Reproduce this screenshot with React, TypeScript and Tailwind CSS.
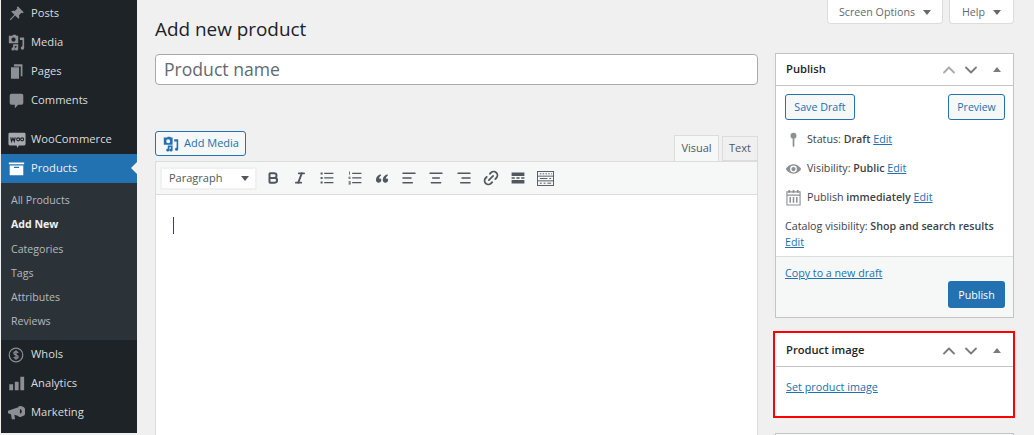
import { AlignCenter, AlignLeft, AlignRight, Bold, ChevronDown, ChevronUp, Italic, Link2 } from 'lucide-react';
import type { ReactNode } from 'react';

const font = { fontFamily: '"Open Sans", "Noto Sans", sans-serif' };

function Svg({ children, size = 17, className = '' }: { children: ReactNode; size?: number; className?: string }) {
  return (
    <svg width={size} height={size} viewBox="0 0 20 20" fill="currentColor" className={className}>
      {children}
    </svg>
  );
}

const PinIcon = () => (
  <Svg><path d="M11.500 1.500l7 7-1.400 1.100-1.200-.6-3 3c.7 1.600.4 3.200-.6 4.300L8.400 12.400 3 18l-1-1 5.500-5.500-3.800-3.900c1.100-1 2.800-1.300 4.300-.6l3-3-.6-1.200z" /></Svg>
);
const MediaIcon = ({ size = 17 }: { size?: number }) => (
  <Svg size={size} className="shrink-0">
    <path fillRule="evenodd" d="M1 2h4l1-1h3l1 1h2v9H1V2zm5.500 2a2.500 2.500 0 100 5 2.500 2.500 0 000-5z" />
    <path d="M14 4h5v12.500a2 2 0 11-2-2V7h-3V4zM6 12h6v5.500a2 2 0 11-2-2V14H8v3.500a2 2 0 11-2-2V12z" />
  </Svg>
);
const PagesIcon = () => (
  <Svg><path d="M7 1.500h10v14h-2V4H7V1.500zM3.500 5H13v13.500H3.500V5z" /></Svg>
);
const CommentIcon = () => (
  <Svg><path d="M4 2h12a2 2 0 012 2v9a2 2 0 01-2 2h-4l-4 4v-4H4a2 2 0 01-2-2V4a2 2 0 012-2z" /></Svg>
);
const WooIcon = () => (
  <svg width="18" height="18" viewBox="0 0 20 20" className="shrink-0">
    <path fill="#a7aaad" d="M2 2h16a1.500 1.500 0 011.500 1.500v11a1.500 1.500 0 01-1.500 1.500h-6l-1.500 3-1-3H2A1.500 1.500 0 01.500 14.500v-11A1.500 1.500 0 012 2z" />
    <path fill="none" stroke="#1d2327" strokeWidth="1.300" d="M3 7l1 4.500 1.500-3.500 1.500 3.500 1-4.500" />
    <circle cx="11.300" cy="9.300" r="1.700" fill="none" stroke="#1d2327" strokeWidth="1.200" />
    <circle cx="15.700" cy="9.300" r="1.700" fill="none" stroke="#1d2327" strokeWidth="1.200" />
  </svg>
);
const ArchiveIcon = () => (
  <Svg>
    <path fillRule="evenodd" d="M1 3h18v2H1V3zm1 3.500h16V18H2V6.500zM7 8v1.500h6V8H7z" />
  </Svg>
);
const DollarIcon = () => (
  <svg width="16" height="16" viewBox="0 0 20 20" fill="none" stroke="currentColor" className="shrink-0">
    <circle cx="10" cy="10" r="8.500" strokeWidth="1.500" />
    <path strokeWidth="1.600" d="M12.700 7.300c-.5-1-1.500-1.500-2.700-1.500-1.500 0-2.600.8-2.600 2s1 1.800 2.600 2.200 2.700 1 2.700 2.200-1.200 2-2.700 2c-1.300 0-2.300-.6-2.800-1.600M10 4v12" />
  </svg>
);
const BarsIcon = () => (
  <Svg><path d="M1.500 11h4.500v7H1.500zM8 8h4.500v10H8zM14.500 2H19v16h-4.500z" /></Svg>
);
const MegaphoneIcon = () => (
  <Svg>
    <path d="M0 8L13 3.500v11L7.500 12.500l.8 5.500H4.500L3.500 12 0 11V8z" />
    <path fillRule="evenodd" d="M12.500 2.500a6.500 6.500 0 110 12.500V2.500zm1.500 3.500v5.500a2.800 2.800 0 000-5.500z" />
  </Svg>
);

function MenuItem({ icon, label, active = false }: { icon: ReactNode; label: string; active?: boolean }) {
  return (
    <div className={`relative flex h-[29px] items-center pl-[7px] text-[11.200px] ${active ? 'bg-[#2271b1] text-[#f0f0f1]' : 'text-[#dcdcde]'}`}>
      <span className={`flex w-[23px] shrink-0 ${active ? 'text-white' : 'text-[#8c8f94]'}`}>{icon}</span>
      <span>{label}</span>
      {active && (
        <span className="absolute right-0 top-[8px] border-y-[6px] border-r-[6px] border-y-transparent border-r-[#f0f0f1]" />
      )}
    </div>
  );
}

function Sidebar() {
  const sub = ['All Products', 'Add New', 'Categories', 'Tags', 'Attributes', 'Reviews'];
  return (
    <aside className="ml-px h-[433px] w-[136px] shrink-0 overflow-hidden bg-[#1d2327]">
      <div className="-mt-[1px]">
        <MenuItem icon={<PinIcon />} label="Posts" />
        <MenuItem icon={<MediaIcon />} label="Media" />
        <MenuItem icon={<PagesIcon />} label="Pages" />
        <MenuItem icon={<CommentIcon />} label="Comments" />
        <div className="h-[10px]" />
        <MenuItem icon={<WooIcon />} label="WooCommerce" />
        <MenuItem icon={<ArchiveIcon />} label="Products" active />
        <ul className="bg-[#2c3338] pb-[6px] pt-[6px] text-[10.600px] text-[#b4b9be]">
          {sub.map((s) => (
            <li key={s} className={`flex h-[24.200px] items-center pl-[10px] ${s === 'Add New' ? 'font-bold text-[#f0f0f1]' : ''}`}>
              {s}
            </li>
          ))}
        </ul>
        <MenuItem icon={<DollarIcon />} label="Whols" />
        <MenuItem icon={<BarsIcon />} label="Analytics" />
        <MenuItem icon={<MegaphoneIcon />} label="Marketing" />
      </div>
    </aside>
  );
}

const UlIcon = () => (
  <Svg size={16}><path d="M2 3h2.500v2.500H2zM6.500 3.500H18V5H6.500zM2 8.700h2.500v2.500H2zM6.500 9.200H18v1.500H6.500zM2 14.500h2.500V17H2zM6.500 15H18v1.500H6.500z" /></Svg>
);
const OlIcon = () => (
  <Svg size={16}><path d="M2.500 2h1v4h-1zM6.500 3.500H18V5H6.500zM2 8.500h2.500v1H3v.5h1.500v1H2zM6.500 9.200H18v1.500H6.500zM2 14h2.500v4H2v-1h1.500v-.5H2v-1h1.500V15H2zM6.500 15H18v1.500H6.500z" /></Svg>
);
const QuoteIcon = () => (
  <Svg size={17}><path d="M9 5c-3 1-5.500 3-5.500 6.500A3 3 0 006.500 15 3 3 0 009 10c-1 0-1.800.2-2 .5C7 8.800 8 7.500 9.500 6.500zM17 5c-3 1-5.500 3-5.500 6.500a3 3 0 003 3.500 3 3 0 002.500-5c-1 0-1.800.2-2 .5 0-1.700 1-3 2.500-4z" /></Svg>
);
const HrIcon = () => (
  <Svg size={16}><path d="M2 3h16v4.500H2zM2 9h4v2H2zM8 9h4v2H8zM14 9h4v2h-4zM2 12.500h16V17H2z" /></Svg>
);
const KitchenIcon = () => (
  <svg width="17" height="15" viewBox="0 0 18 16" fill="none" stroke="currentColor" strokeWidth="1">
    <rect x="0.500" y="0.500" width="17" height="15" />
    <path d="M0.500 5.500h17M0.500 10.500h17M3 3h1.500M6 3h1.500M9 3h1.500M12 3h1.500M15 3h1M3 8h8M13 8h2M3 13h2M7 13h2M11 13h4" />
  </svg>
);

function ToolIcon({ children }: { children: ReactNode }) {
  return <span className="flex w-[27.300px] items-center justify-center">{children}</span>;
}

function Editor() {
  return (
    <main className="ml-[18px] w-[603px] shrink-0">
      <h1 className="pt-[15px] text-[18.900px] leading-[28px] text-[#1d2327]">Add new product</h1>
      <div className="mt-[11px] flex h-[31px] items-center rounded-[4px] border border-[#a7aaad] bg-white pl-[8px] text-[17.600px] text-[#646970]">
        Product name
      </div>
      <div className="mt-[46px] flex h-[30px] items-start justify-between">
        <button className="flex h-[25px] w-[91px] items-center gap-[5px] whitespace-nowrap rounded-[3px] border border-[#2271b1] bg-[#f6f7f7] pl-[7px] text-[11px] text-[#2271b1]">
          <MediaIcon size={16} /> Add Media
        </button>
        <div className="flex items-end pt-[4px] text-[11px] text-[#50575e]">
          <span className="flex h-[26px] w-[45px] items-center justify-center border border-b-0 border-[#dcdcde] bg-[#f6f7f7]">Visual</span>
          <span className="ml-[3px] flex h-[25px] w-[36px] items-center justify-center border border-[#dcdcde] bg-[#f0f0f1]">Text</span>
        </div>
      </div>
      <div className="border-x border-[#dcdcde]">
        <div className="flex h-[34px] items-center border-y border-[#dcdcde] bg-[#f6f7f7] pl-[4px] text-[#50575e]">
          <div className="flex h-[23px] w-[97px] items-center justify-between border-2 border-[#f0f0f1] bg-white pl-[7px] pr-[6px] text-[11px] text-[#50575e]">
            Paragraph
            <span className="border-x-[4px] border-t-[5px] border-x-transparent border-t-[#50575e]" />
          </div>
          <div className="ml-[2px] flex items-center">
            <ToolIcon><Bold size={14} strokeWidth={3.4} /></ToolIcon>
            <ToolIcon><Italic size={14} strokeWidth={3.2} /></ToolIcon>
            <ToolIcon><UlIcon /></ToolIcon>
            <ToolIcon><OlIcon /></ToolIcon>
            <ToolIcon><QuoteIcon /></ToolIcon>
            <ToolIcon><AlignLeft size={16} strokeWidth={2.2} /></ToolIcon>
            <ToolIcon><AlignCenter size={16} strokeWidth={2.2} /></ToolIcon>
            <ToolIcon><AlignRight size={16} strokeWidth={2.2} /></ToolIcon>
            <ToolIcon><Link2 size={18} strokeWidth={2.4} className="-rotate-45" /></ToolIcon>
            <ToolIcon><HrIcon /></ToolIcon>
            <ToolIcon><KitchenIcon /></ToolIcon>
          </div>
        </div>
        <div className="h-[240px] bg-white pl-[17px] pt-[22px]">
          <div className="h-[17px] w-px bg-[#3c434a]" />
        </div>
      </div>
    </main>
  );
}

function BoxHeader({ title }: { title: string }) {
  return (
    <div className="flex h-[32px] items-center justify-between border-b border-[#c3c4c7] pl-[10px] pr-[12px] text-[11.200px] font-semibold text-[#1d2327]">
      {title}
      <div className="flex items-center text-[#787c82]">
        <ChevronUp size={20} strokeWidth={2.2} className={title === 'Publish' ? 'text-[#a7aaad]' : ''} />
        <ChevronDown size={20} strokeWidth={2.2} className="ml-[2px]" />
        <span className="ml-[12px] border-x-[4px] border-b-[5px] border-x-transparent border-b-[#787c82]" />
      </div>
    </div>
  );
}

const EditLink = ({ children = 'Edit' }: { children?: string }) => (
  <a className="text-[#2271b1] underline">{children}</a>
);

const KeyIcon = () => (
  <Svg size={18}>
    <circle cx="10" cy="5" r="3.500" />
    <path d="M9 8h2v9l-1 1.500L9 17z" />
  </Svg>
);
const EyeIcon = () => (
  <Svg size={18}>
    <path fillRule="evenodd" d="M10 4.500c4 0 7.500 2.700 9 5.500-1.500 2.800-5 5.500-9 5.500S2.500 12.800 1 10c1.500-2.800 5-5.500 9-5.500zm0 1.500a4 4 0 100 8 4 4 0 000-8z" />
    <circle cx="10" cy="10" r="2.500" />
  </Svg>
);
const CalendarIcon = () => (
  <svg width="15" height="17" viewBox="0 0 16 18" fill="none" stroke="currentColor" strokeWidth="1.200">
    <path strokeWidth="1.800" d="M3.500 1v3M8 1v3M12.500 1v3" />
    <path d="M1 3h14v14H1zM1 6.500h14" />
    <path strokeWidth="1.600" d="M4.500 8.500v6M8 8.500v6M11.500 8.500v6" />
  </svg>
);

function MiscRow({ icon, children }: { icon: ReactNode; children: ReactNode }) {
  return (
    <div className="flex h-[29px] items-center">
      <span className="flex w-[17px] shrink-0 justify-center text-[#8c8f94]">{icon}</span>
      <span className="ml-[5px]">{children}</span>
    </div>
  );
}

function SideColumn() {
  return (
    <section className="ml-[17px] w-[239px] shrink-0">
      <div className="flex h-[24px] justify-end gap-[6px] text-[10.700px] text-[#646970]">
        <div className="flex w-[116px] items-center justify-center gap-[8px] rounded-b-[4px] border border-t-0 border-[#dcdcde] bg-white pt-[2px]">
          Screen Options <span className="border-x-[4px] border-t-[5px] border-x-transparent border-t-[#646970]" />
        </div>
        <div className="flex w-[65px] items-center justify-center gap-[8px] rounded-b-[4px] border border-t-0 border-[#dcdcde] bg-white pt-[2px]">
          Help <span className="border-x-[4px] border-t-[5px] border-x-transparent border-t-[#646970]" />
        </div>
      </div>
      <div className="mt-[29px] h-[265px] border border-[#c3c4c7] bg-white text-[10.700px] text-[#3c434a]">
        <BoxHeader title="Publish" />
        <div className="h-[170px] px-[9px] pt-[8px]">
          <div className="flex justify-between">
            <button className="h-[26px] w-[70px] rounded-[3px] border border-[#2271b1] bg-[#f6f7f7] text-[#2271b1]">Save Draft</button>
            <button className="-mr-[1px] h-[26px] w-[57px] rounded-[3px] border border-[#2271b1] bg-[#f6f7f7] pt-[1px] text-[10.500px] text-[#2271b1]">Preview</button>
          </div>
          <div className="mt-[5px]">
            <MiscRow icon={<KeyIcon />}>Status: <b className="font-semibold">Draft</b> <EditLink /></MiscRow>
            <MiscRow icon={<EyeIcon />}>Visibility: <b className="font-semibold">Public</b> <EditLink /></MiscRow>
            <MiscRow icon={<CalendarIcon />}>Publish <b className="font-semibold">immediately</b> <EditLink /></MiscRow>
          </div>
          <p className="mt-[6px] whitespace-nowrap leading-[16px]">
            Catalog visibility: <b className="font-semibold">Shop and search results</b>
            <br />
            <EditLink />
          </p>
        </div>
        <div className="h-[61px] border-t border-[#dcdcde] bg-[#f6f7f7] px-[9px] pt-[8px]">
          <EditLink>Copy to a new draft</EditLink>
          <div className="-mr-[1px] flex justify-end">
            <button className="h-[27px] w-[57px] rounded-[3px] bg-[#2271b1] text-white">Publish</button>
          </div>
        </div>
      </div>
      <div className="-ml-[2px] mt-[13px] h-[87px] w-[242px] border-[2px] border-[#ff0000] bg-white text-[10.800px]">
        <div className="pl-[1px] pt-[2px]">
          <BoxHeader title="Product image" />
        </div>
        <div className="pl-[11px] pt-[12px]">
          <EditLink>Set product image</EditLink>
        </div>
      </div>
      <div className="mt-[15px] h-[10px] border border-[#c3c4c7] bg-[#f6f7f7]" />
    </section>
  );
}

export default function App() {
  return (
    <div style={font} className="flex h-[435px] w-[1034px] overflow-hidden bg-[#f0f0f1]">
      <Sidebar />
      <Editor />
      <SideColumn />
    </div>
  );
}
